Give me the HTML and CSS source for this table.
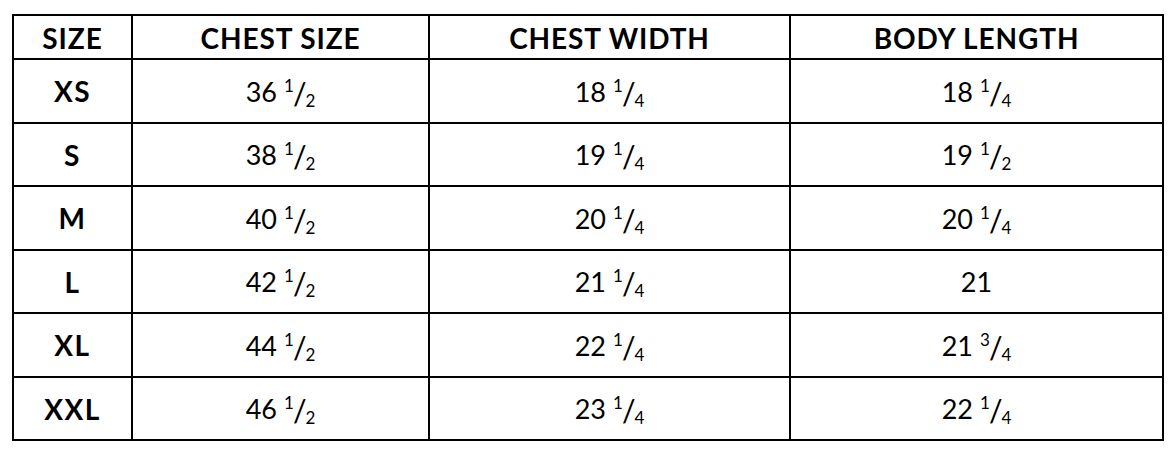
FILE: index.html
```html
<!DOCTYPE html>
<html>
<head>
<meta charset="utf-8">
<link rel="stylesheet" href="styles.css">
</head>
<body>
<div class="chart">
  <div class="cell head">SIZE</div>
  <div class="cell head">CHEST SIZE</div>
  <div class="cell head">CHEST WIDTH</div>
  <div class="cell head">BODY LENGTH</div>

  <div class="cell size">XS</div>
  <div class="cell num">36<span class="frac"><span class="nu">1</span><span class="sl">/</span><span class="de">2</span></span></div>
  <div class="cell num">18<span class="frac"><span class="nu">1</span><span class="sl">/</span><span class="de">4</span></span></div>
  <div class="cell num">18<span class="frac"><span class="nu">1</span><span class="sl">/</span><span class="de">4</span></span></div>

  <div class="cell size">S</div>
  <div class="cell num">38<span class="frac"><span class="nu">1</span><span class="sl">/</span><span class="de">2</span></span></div>
  <div class="cell num">19<span class="frac"><span class="nu">1</span><span class="sl">/</span><span class="de">4</span></span></div>
  <div class="cell num">19<span class="frac"><span class="nu">1</span><span class="sl">/</span><span class="de">2</span></span></div>

  <div class="cell size">M</div>
  <div class="cell num">40<span class="frac"><span class="nu">1</span><span class="sl">/</span><span class="de">2</span></span></div>
  <div class="cell num">20<span class="frac"><span class="nu">1</span><span class="sl">/</span><span class="de">4</span></span></div>
  <div class="cell num">20<span class="frac"><span class="nu">1</span><span class="sl">/</span><span class="de">4</span></span></div>

  <div class="cell size">L</div>
  <div class="cell num">42<span class="frac"><span class="nu">1</span><span class="sl">/</span><span class="de">2</span></span></div>
  <div class="cell num">21<span class="frac"><span class="nu">1</span><span class="sl">/</span><span class="de">4</span></span></div>
  <div class="cell num">21</div>

  <div class="cell size">XL</div>
  <div class="cell num">44<span class="frac"><span class="nu">1</span><span class="sl">/</span><span class="de">2</span></span></div>
  <div class="cell num">22<span class="frac"><span class="nu">1</span><span class="sl">/</span><span class="de">4</span></span></div>
  <div class="cell num">21<span class="frac"><span class="nu">3</span><span class="sl">/</span><span class="de">4</span></span></div>

  <div class="cell size">XXL</div>
  <div class="cell num">46<span class="frac"><span class="nu">1</span><span class="sl">/</span><span class="de">2</span></span></div>
  <div class="cell num">23<span class="frac"><span class="nu">1</span><span class="sl">/</span><span class="de">4</span></span></div>
  <div class="cell num">22<span class="frac"><span class="nu">1</span><span class="sl">/</span><span class="de">4</span></span></div>
</div>
</body>
</html>
```
FILE: styles.css
```css
html, body {
  margin: 0;
  background: #fff;
}
body {
  padding: 14px 0 0 12px;
  font-family: Lato, "Noto Sans", sans-serif;
  color: #000;
}
.chart {
  display: grid;
  width: 1152px;
  box-sizing: border-box;
  grid-template-columns: 117px 295px 359px 371px;
  grid-template-rows: 42px 62px 61px 62px 61px 62px 61px;
  gap: 2px;
  padding: 2px;
  background: #000;
}
.cell {
  background: #fff;
  display: flex;
  align-items: center;
  justify-content: center;
  line-height: 1;
}
.head {
  font-weight: 700;
  font-size: 28px;
  letter-spacing: 0.9px;
  padding-top: 2px;
}
.size {
  font-weight: 700;
  font-size: 28px;
  letter-spacing: 1.5px;
}
.num {
  font-size: 27px;
}
.frac {
  display: inline-flex;
  height: 27px;
  margin-left: 7px;
  font-size: 17px;
}
.nu {
  align-self: flex-start;
  margin-top: -1px;
}
.sl {
  align-self: center;
  font-size: 30px;
  margin: 3px -1px 0 -1px;
}
.de {
  align-self: flex-end;
  margin-bottom: -4px;
}
```
